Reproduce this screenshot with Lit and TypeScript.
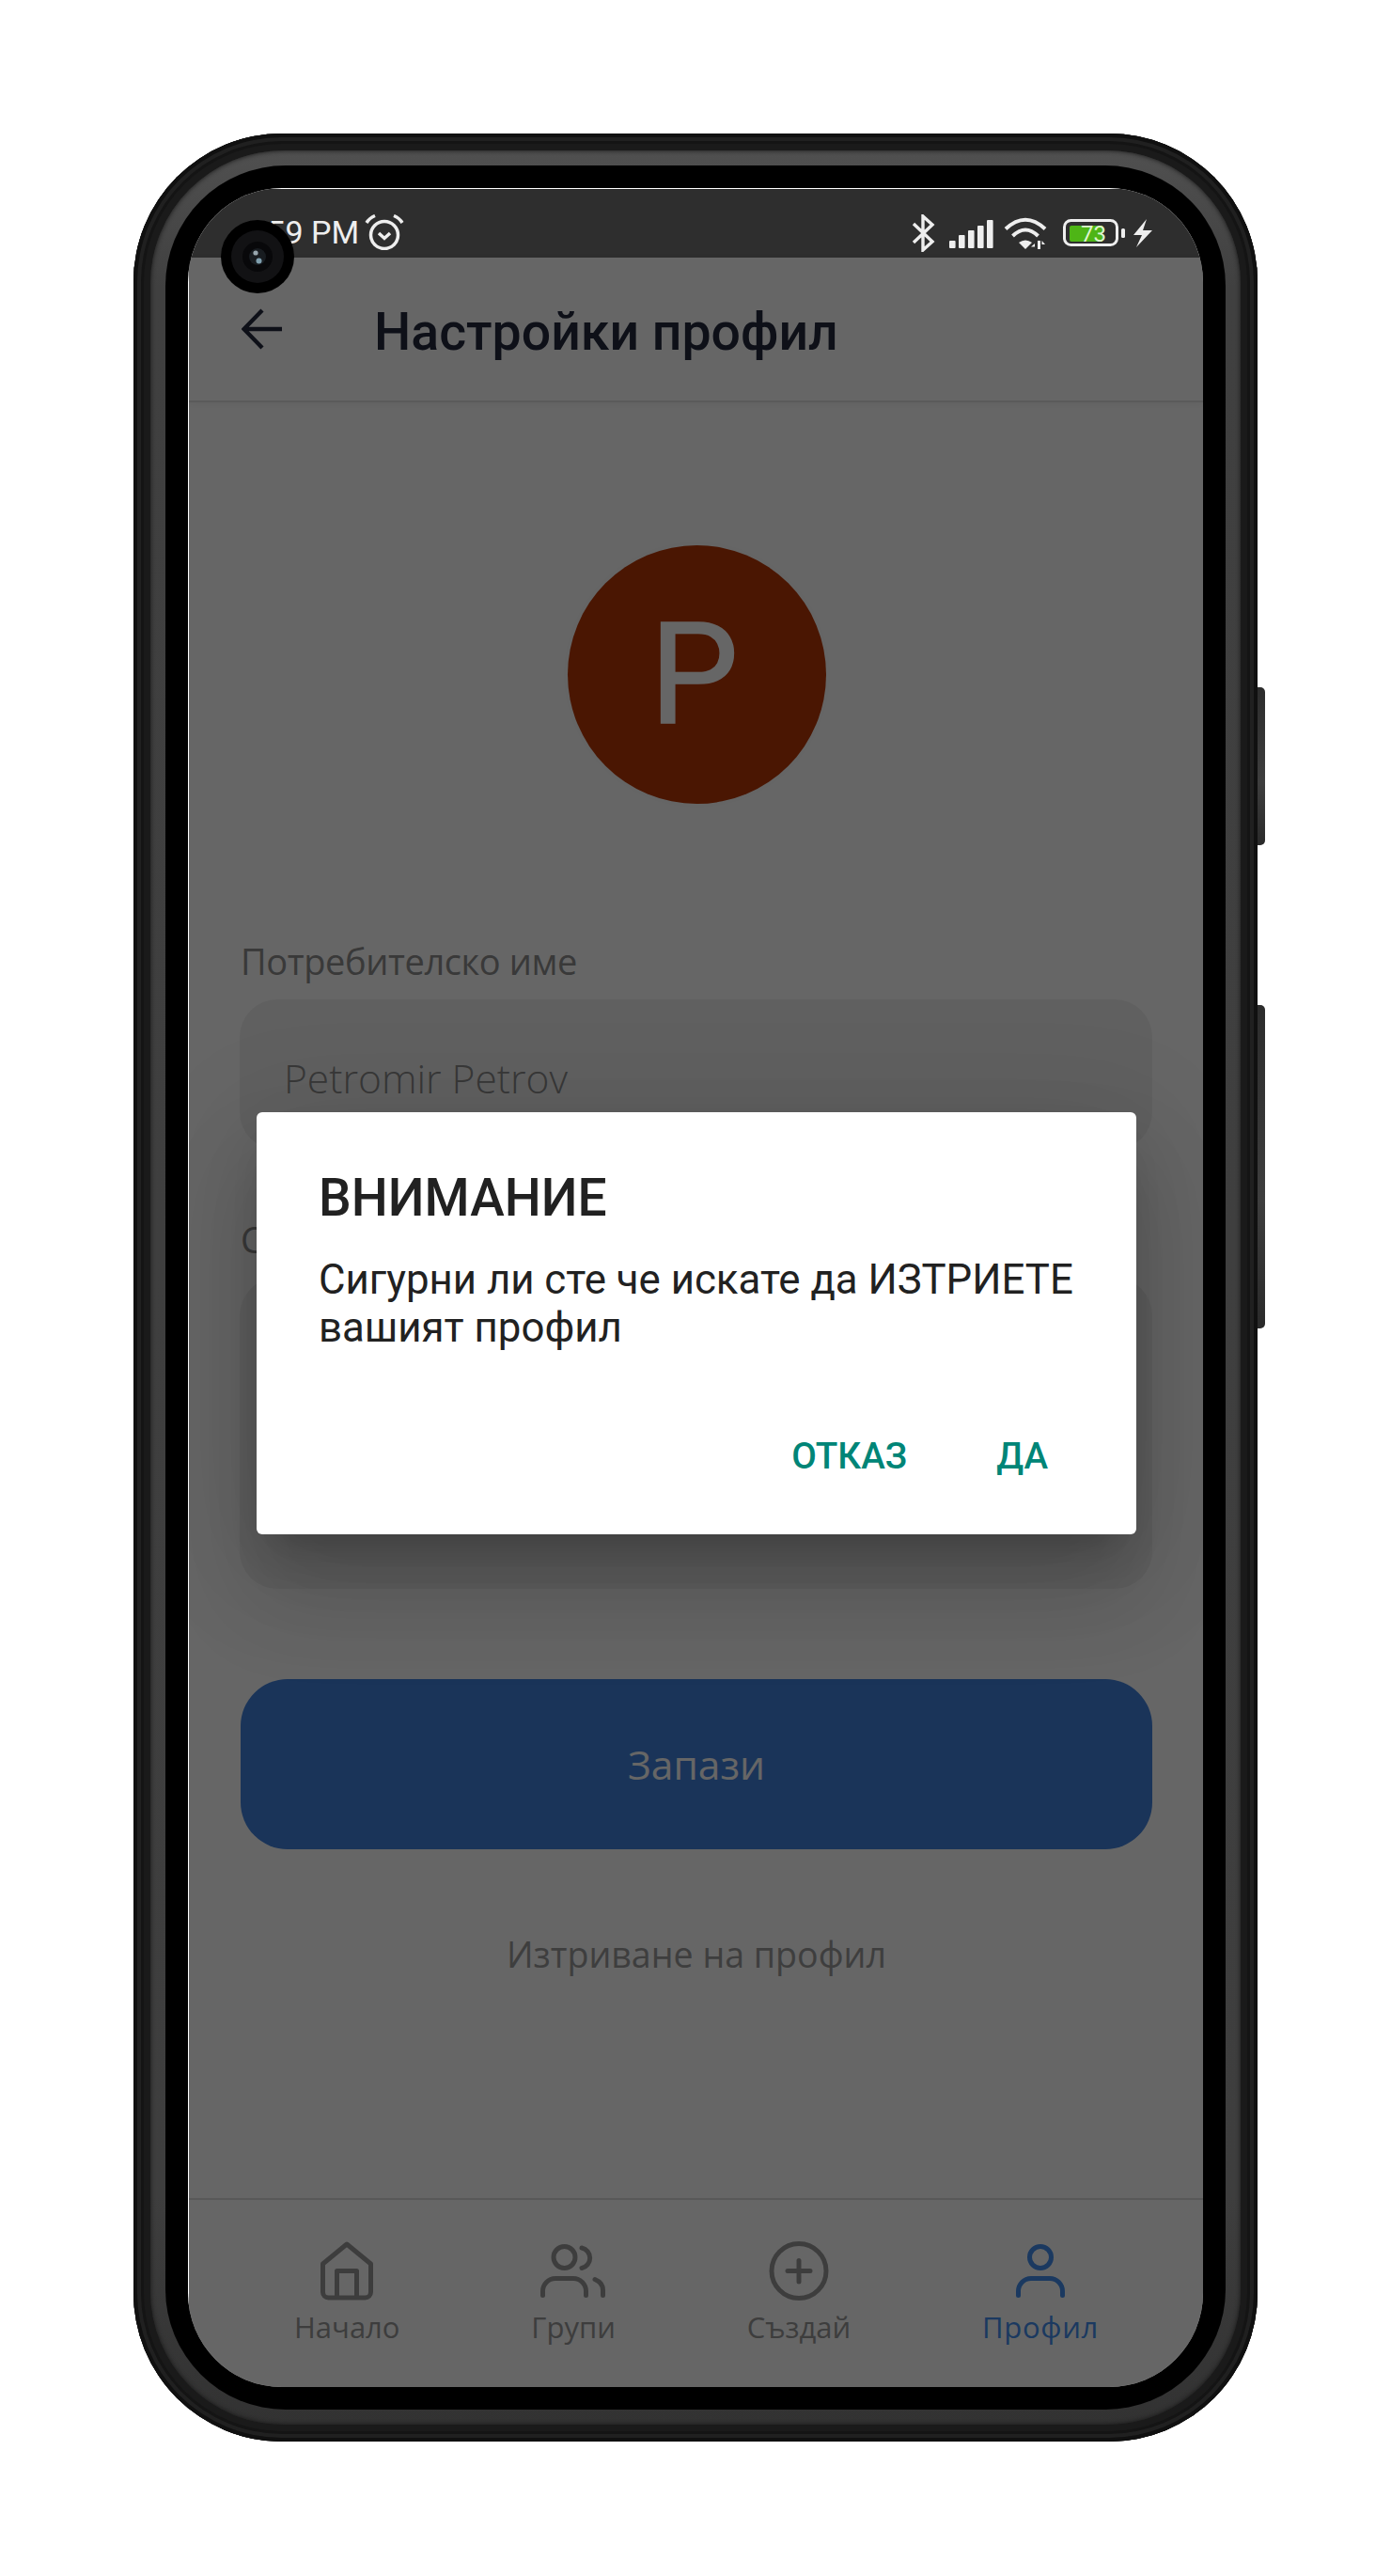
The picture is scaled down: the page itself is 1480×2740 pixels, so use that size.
import { LitElement, html, svg, css } from 'lit';
import { customElement } from 'lit/decorators.js';

const navItems = [
  {
    label: 'Начало',
    width: 56,
    icon: svg`<path d="M2.5 24 L28 3 L53.5 24 V54 a6 6 0 0 1 -6 6 H8.5 a6 6 0 0 1 -6 -6 Z M17.5 60 V31.5 H38.5 V60" />`,
  },
  {
    label: 'Групи',
    width: 70,
    icon: svg`<circle cx="25.5" cy="17" r="11.5" />
      <path d="M44 7 a11 11 0 0 1 0 21.5 M2.5 57.5 V53 a13.5 13.5 0 0 1 13.5 -13.5 H35 a13.5 13.5 0 0 1 13.5 13.5 V57.5 M58 40.5 Q66.5 44 66.5 52 V57.5" />`,
  },
  {
    label: 'Създай',
    width: 64,
    icon: svg`<circle cx="32" cy="31.5" r="29" /><path d="M20 31.5 H44 M32 20.5 V43" />`,
  },
  {
    label: 'Профил',
    width: 52,
    active: true,
    icon: svg`<circle cx="26" cy="17" r="11.5" />
      <path d="M2.5 57.5 V53 a13.5 13.5 0 0 1 13.5 -13.5 H36 a13.5 13.5 0 0 1 13.5 13.5 V57.5" />`,
  },
];

@customElement('app-root')
export class AppRoot extends LitElement {
  static styles = css`
    :host {
      display: block;
      width: 1480px;
      height: 2740px;
      background: #fff;
      padding: 142px 0 0 142px;
      box-sizing: border-box;
      font-family: 'Open Sans', 'Noto Sans', sans-serif;
    }

    .phone {
      position: relative;
      width: 1196px;
      height: 2455px;
      box-sizing: border-box;
      padding: 18px;
      border-radius: 158px;
      background: #1a1a1a;
      box-shadow: inset 0 0 0 4px #101010, inset 0 0 0 8px #202020, inset 0 0 0 11px #141414;
    }

    .side {
      position: absolute;
      left: 100%;
      width: 8px;
      border-radius: 0 5px 5px 0;
      background: linear-gradient(#2c2c2c, #3e3e3e 60%, #2a2a2a);
    }

    .side.power {
      top: 589px;
      height: 168px;
    }

    .side.volume {
      top: 927px;
      height: 344px;
    }

    .band {
      height: 100%;
      box-sizing: border-box;
      padding: 16px;
      border-radius: 142px;
      background: linear-gradient(#505050, #404040 6%, #3e3e3e 90%, #323232);
      box-shadow: inset 0 0 5px #161616;
    }

    .bezel {
      height: 100%;
      box-sizing: border-box;
      padding: 24px;
      border-radius: 128px;
      background: #000;
    }

    .screen {
      position: relative;
      height: 100%;
      box-sizing: border-box;
      padding: 1px 0 0 1px;
      border-radius: 100px;
      overflow: hidden;
      background: #fff;
      display: flex;
      flex-direction: column;
    }

    .status {
      flex: none;
      height: 73px;
      background: #2e2e2e;
      color: #eee;
      display: flex;
      align-items: flex-start;
      justify-content: space-between;
      padding: 0 54px 0 0;
      font-family: Roboto, sans-serif;
    }

    .status-left {
      display: flex;
      align-items: flex-start;
      gap: 6px;
      padding: 29px 0 0 56px;
      font-size: 34px;
      line-height: 34px;
    }

    .status-left svg {
      display: block;
      margin-top: -2px;
    }

    .status-right {
      display: flex;
      align-items: flex-start;
      padding-top: 26px;
    }

    .status svg {
      fill: none;
      stroke: #eee;
      flex: none;
    }

    .app {
      position: relative;
      flex: 1;
      display: flex;
      flex-direction: column;
      min-height: 0;
    }

    .header {
      flex: none;
      height: 154px;
      box-sizing: border-box;
      border-bottom: 2px solid #e2e2e2;
      display: flex;
      align-items: center;
      padding-left: 56px;
      gap: 97px;
      box-shadow: 0 2px 8px rgba(0, 0, 0, 0.05);
    }

    .header svg {
      fill: none;
      stroke: #232a3e;
      stroke-width: 4.4;
      flex: none;
    }

    .header h1 {
      margin: 8px 0 0;
      font: 500 55.4px/60px Roboto, sans-serif;
      color: #232a3e;
    }

    .body {
      flex: 1;
      display: flex;
      flex-direction: column;
      padding: 0 54px 0 55px;
    }

    .avatar {
      align-self: center;
      margin-top: 152px;
      width: 275px;
      height: 275px;
      box-sizing: border-box;
      padding-right: 5px;
      border-radius: 50%;
      background: #b93705;
      color: #fff;
      display: flex;
      align-items: center;
      justify-content: center;
      font: 400 150px/1 Roboto, sans-serif;
      -webkit-text-stroke: 1.5px #fff;
      box-shadow: 0 0 12px rgba(0, 0, 0, 0.03);
    }

    label {
      display: block;
      height: 50px;
      font-size: 38px;
      letter-spacing: -0.4px;
      line-height: 50px;
      color: #8e8e8e;
      margin-bottom: 16px;
    }

    label.first {
      margin-top: 142px;
    }

    .input {
      box-sizing: border-box;
      border-radius: 40px;
      background: #f1f1f1;
      margin-left: -1px;
      padding: 54px 47px 0;
      font-size: 42.5px;
      line-height: 60px;
      font-weight: 300;
      color: #8c8c8c;
    }

    .input.name {
      height: 160px;
      margin-bottom: 70px;
    }

    .input.other {
      height: 331px;
    }

    .save {
      margin-top: 96px;
      height: 181px;
      border-radius: 50px;
      background: #4182de;
      color: #fff;
      display: flex;
      align-items: center;
      justify-content: center;
      font-size: 42.5px;
    }

    .delete {
      margin-top: 87px;
      text-align: center;
      font-size: 37.6px;
      line-height: 50px;
      color: #9c9c9c;
    }

    nav {
      flex: none;
      height: 201px;
      box-sizing: border-box;
      border-top: 2px solid #dcdcdc;
      padding: 44px 111px 0 112px;
      display: flex;
      justify-content: space-between;
      color: #9a9a9a;
    }

    nav a {
      display: flex;
      flex-direction: column;
      align-items: center;
      font-size: 31px;
      line-height: 44px;
    }

    nav a.active {
      color: #4490f0;
      letter-spacing: 0.7px;
    }

    nav svg {
      display: block;
      height: 64px;
      fill: none;
      stroke: currentColor;
      stroke-width: 5;
      stroke-linecap: round;
      stroke-linejoin: round;
      margin-bottom: 5px;
    }

    .scrim {
      position: absolute;
      inset: 0;
      background: rgba(0, 0, 0, 0.6);
    }

    .dialog {
      position: absolute;
      left: 72px;
      top: 909px;
      width: 936px;
      height: 449px;
      box-sizing: border-box;
      padding: 59px 50px 0 66px;
      border-radius: 6px;
      background: #fff;
      font-family: Roboto, sans-serif;
      box-shadow: 0 63px 100px 8px rgba(0, 0, 0, 0.12), 0 24px 120px 16px rgba(0, 0, 0, 0.1),
        0 29px 39px -18px rgba(0, 0, 0, 0.2);
    }

    .dialog h2 {
      margin: 0;
      font-size: 55px;
      line-height: 64px;
      font-weight: 500;
      color: #212121;
    }

    .dialog p {
      margin: 30px 0 0;
      font-size: 43.8px;
      line-height: 51px;
      color: #212121;
    }

    .actions {
      margin-top: 89px;
      display: flex;
      justify-content: flex-end;
      gap: 95px;
      font-size: 38.6px;
      line-height: 44px;
      font-weight: 500;
      color: #008577;
    }

    .actions span:last-child {
      margin-right: 44px;
    }

    .camera {
      position: absolute;
      left: 35px;
      top: 34px;
      width: 78px;
      height: 78px;
      border-radius: 50%;
      background: #000;
      display: flex;
      align-items: center;
      justify-content: center;
    }
  `;

  render() {
    return html`
      <div class="phone">
        <div class="side power"></div>
        <div class="side volume"></div>
        <div class="band">
          <div class="bezel">
            <div class="screen">
              <div class="status">
                <div class="status-left">
                  <span>1:59 PM</span>
                  <svg width="42" height="38" viewBox="0 0 42 38" stroke-width="3.5">
                    <circle cx="21" cy="22" r="14.5" />
                    <path d="M15 20 L21 25.5 L27 20 M2 9 Q5 4 11 1.5 M31 1.5 Q37 4 40 9" />
                  </svg>
                </div>
                <div class="status-right">
                  <svg width="26" height="40" viewBox="0 0 26 40" stroke-width="3.4" style="margin-top:1px">
                    <path d="M3 10 L23 29 L13 38 V2 L23 11 L3 30" />
                  </svg>
                  <svg width="50" height="30" viewBox="0 0 50 30" style="margin:7px 0 0 15px">
                    <g fill="#eee" stroke="none">
                      <rect x="0" y="22" width="6.6" height="8" rx="1" />
                      <rect x="10" y="16" width="6.6" height="14" rx="1" />
                      <rect x="20" y="11" width="6.6" height="19" rx="1" />
                      <rect x="30" y="6" width="6.6" height="24" rx="1" />
                      <rect x="40" y="0" width="6.6" height="30" rx="1" />
                    </g>
                  </svg>
                  <svg width="46" height="36" viewBox="0 0 46 36" stroke-width="4" style="margin:4px 0 0 8px">
                    <path d="M2 12.5 Q23 -7 44 12.5 M9.5 20 Q23 7 36.5 20" />
                    <path d="M16 27 Q23 22 30 27 L23 34 Z" fill="#eee" stroke="none" />
                    <path d="M33 28 L29 31.5 H33 Z M36 25 H39 V34 H36 Z M40.5 25 L44 29 H40.5 Z" fill="#eee" stroke="none" />
                  </svg>
                  <svg width="68" height="30" viewBox="0 0 68 30" stroke-width="3" style="margin:6px 0 0 17px">
                    <rect x="1.5" y="1.5" width="56" height="26" rx="7" />
                    <path d="M9 7 H42 V24 H9 Q7 24 7 22 V9 Q7 7 9 7 Z" fill="#4eb516" stroke="none" />
                    <rect x="62" y="10" width="4" height="10" rx="1.5" fill="#eee" stroke="none" />
                    <text x="19" y="24" font-size="24" fill="#dff5cf" stroke="none" font-family="Roboto, sans-serif">73</text>
                  </svg>
                  <svg width="20" height="30" viewBox="0 0 20 30" style="margin:6px 0 0 7px">
                    <path d="M14 0 L0 17 H9 L3 30 L20 12 H10 Z" fill="#eee" stroke="none" />
                  </svg>
                </div>
              </div>
              <div class="app">
                <header class="header">
                  <svg width="44" height="44" viewBox="0 0 44 44"><path d="M43 22 H3 M22 2 L2.5 22 L22 42" /></svg>
                  <h1>Настройки профил</h1>
                </header>
                <div class="body">
                  <div class="avatar">P</div>
                  <label class="first">Потребителско име</label>
                  <div class="input name">Petromir Petrov</div>
                  <label>С</label>
                  <div class="input other"></div>
                  <div class="save">Запази</div>
                  <div class="delete">Изтриване на профил</div>
                </div>
                <nav>
                  ${navItems.map(
                    (item) => html`
                      <a class=${item.active ? 'active' : ''}>
                        <svg width=${item.width} viewBox="0 0 ${item.width} 64">${item.icon}</svg>
                        ${item.label}
                      </a>
                    `,
                  )}
                </nav>
                <div class="scrim"></div>
                <div class="dialog">
                  <h2>ВНИМАНИЕ</h2>
                  <p>Сигурни ли сте че искате да ИЗТРИЕТЕ вашият профил</p>
                  <div class="actions"><span>ОТКАЗ</span><span>ДА</span></div>
                </div>
              </div>
              <div class="camera">
                <svg width="56" height="56" viewBox="0 0 56 56">
                  <circle cx="28" cy="28" r="28" fill="#121214" />
                  <circle cx="28" cy="28" r="16" fill="#08080a" />
                  <circle cx="28" cy="28" r="9" fill="#181c20" />
                  <circle cx="26" cy="24" r="2.6" fill="#98a6ae" />
                  <circle cx="29.5" cy="32.5" r="3" fill="#7f9fae" />
                </svg>
              </div>
            </div>
          </div>
        </div>
      </div>
    `;
  }
}
